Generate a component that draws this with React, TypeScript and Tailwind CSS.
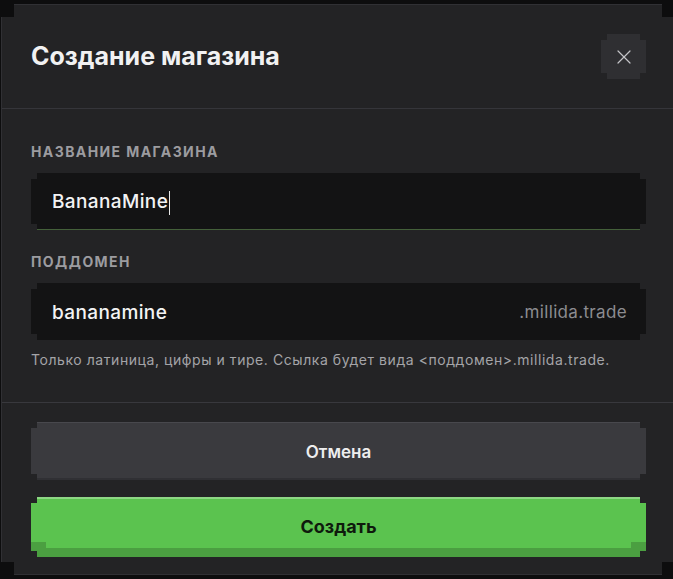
import { X } from "lucide-react";

// pixel-style notched corners, one clip path per notch size
const notch6 =
  "[clip-path:polygon(6px_0,calc(100%_-_6px)_0,calc(100%_-_6px)_6px,100%_6px,100%_calc(100%_-_6px),calc(100%_-_6px)_calc(100%_-_6px),calc(100%_-_6px)_100%,6px_100%,6px_calc(100%_-_6px),0_calc(100%_-_6px),0_6px,6px_6px)]";
const notch13 =
  "[clip-path:polygon(13px_0,calc(100%_-_13px)_0,calc(100%_-_13px)_13px,100%_13px,100%_calc(100%_-_13px),calc(100%_-_13px)_calc(100%_-_13px),calc(100%_-_13px)_100%,13px_100%,13px_calc(100%_-_13px),0_calc(100%_-_13px),0_13px,13px_13px)]";
const notch12 =
  "[clip-path:polygon(12px_0,calc(100%_-_12px)_0,calc(100%_-_12px)_12px,100%_12px,100%_calc(100%_-_12px),calc(100%_-_12px)_calc(100%_-_12px),calc(100%_-_12px)_100%,12px_100%,12px_calc(100%_-_12px),0_calc(100%_-_12px),0_12px,12px_12px)]";

function Label({ children }: { children: React.ReactNode }) {
  return (
    <div className="text-[14px] leading-4 font-bold tracking-[0.1em] uppercase text-[#9c9ca0]">
      {children}
    </div>
  );
}

export default function App() {
  return (
    <div
      className="h-[579px] w-full overflow-hidden bg-[#0d0d0e] pt-[4px] pl-[1px]"
      style={{ fontFamily: "Inter, 'Noto Sans', sans-serif" }}
    >
      <div className={`w-[674px] h-[571px] bg-[#303034] p-[1px] ${notch13}`}>
        <div className={`h-full flex flex-col bg-[#232325] ${notch12}`}>
          {/* header */}
          <div className="h-[103px] flex items-center justify-between pl-[29px] pr-[28px]">
            <h1 className="text-[25px] font-bold text-[#f1f1f2]">Создание магазина</h1>
            <button
              className={`w-[45px] h-[45px] flex items-center justify-center bg-[#2f2f32] text-[#c4c4c8] ${notch6}`}
            >
              <X size={24} strokeWidth={1.2} />
            </button>
          </div>
          <div className="h-px bg-[#35353a]" />

          {/* form */}
          <div className="pl-[29px] pr-[28px] pt-[35px] pb-[34px]">
            <Label>Название магазина</Label>
            <div
              className={`mt-[13px] h-[57px] flex items-center px-[21px] pt-[3px] bg-[#131314] border-b border-[#44603a] ${notch6}`}
            >
              <span className="text-[19px] font-medium tracking-[0.02em] text-[#f3f3f4]">BananaMine</span>
              <span className="ml-[1px] w-px h-[24px] bg-[#e8e8e8]" />
            </div>

            <div className="mt-[24px]">
              <Label>Поддомен</Label>
            </div>
            <div
              className={`mt-[13px] h-[57px] flex items-center justify-between pl-[21px] pr-[19px] pt-[3px] bg-[#131314] ${notch6}`}
            >
              <span className="text-[19px] font-medium tracking-[0.02em] text-[#f3f3f4]">bananamine</span>
              <span className="text-[17px] tracking-[0.02em] text-[#8c8c90]">.millida.trade</span>
            </div>
            <p className="mt-[12px] text-[14px] leading-4 tracking-[0.04em] text-[#a4a4a8]">
              Только латиница, цифры и тире. Ссылка будет вида &lt;поддомен&gt;.millida.trade.
            </p>
          </div>
          <div className="h-px bg-[#38383d]" />

          {/* actions */}
          <div className="pl-[29px] pr-[28px] pt-[19px] flex flex-col gap-[17px]">
            <button
              className={`h-[58px] flex items-center justify-center pt-[3px] bg-[#3a3a3e] shadow-[inset_0_1px_0_#48484d,inset_0_-2px_0_#303034] text-[17px] font-semibold text-[#ededee] ${notch6}`}
            >
              Отмена
            </button>
            <button
              className={`relative h-[60px] flex items-center justify-center bg-[#5bc34f] shadow-[inset_0_2px_0_#8ed685,inset_0_-9px_0_#4b9f41] text-[18px] font-bold text-[#0f1a0d] ${notch6}`}
            >
              <span className="absolute left-0 bottom-[9px] w-[15px] h-[6px] bg-[#4b9f41]" />
              <span className="absolute right-0 bottom-[9px] w-[15px] h-[6px] bg-[#4b9f41]" />
              <span className="-mt-[2px]">Создать</span>
            </button>
          </div>
        </div>
      </div>
    </div>
  );
}
